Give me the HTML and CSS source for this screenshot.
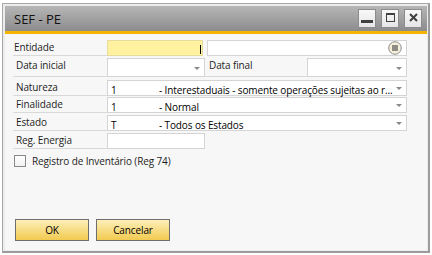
FILE: index.html
```html
<!DOCTYPE html>
<html lang="pt">
<head>
<meta charset="utf-8">
<title>SEF - PE</title>
<link rel="stylesheet" href="styles.css">
</head>
<body>
<div class="window">
  <div class="titlebar">
    <span class="title">SEF - PE</span>
    <div class="win-buttons">
      <span class="wbtn"><svg width="16" height="17" viewBox="0 0 16 17"><rect x="2" y="10" width="12" height="3" fill="#404040"/></svg></span>
      <span class="wbtn"><svg width="16" height="17" viewBox="0 0 16 17"><rect x="4.5" y="3.5" width="8" height="8" fill="none" stroke="#404040" stroke-width="1"/><line x1="4" y1="4.5" x2="13" y2="4.5" stroke="#404040" stroke-width="1"/></svg></span>
      <span class="wbtn"><svg width="16" height="17" viewBox="0 0 16 17"><path d="M5 4 L12 11 M12 4 L5 11" stroke="#404040" stroke-width="2" fill="none"/></svg></span>
    </div>
  </div>
  <div class="accent"></div>
  <div class="content">
    <div class="row row-entidade">
      <div class="label label-first">Entidade</div>
      <div class="field field-yellow"><span class="caret"></span></div>
      <div class="field field-entity"><svg class="menu-icon" width="14" height="14" viewBox="0 0 14 14"><circle cx="7" cy="7" r="6.3" fill="#f3efdb" stroke="#8c8c8c" stroke-width="1"/><path d="M4 5 H10 M4 7 H10 M4 9 H10" stroke="#2c2c2c" stroke-width="1.1"/></svg></div>
    </div>
    <div class="row row-data">
      <div class="label">Data inicial</div>
      <div class="field field-date"><span class="arrow arrow-date"></span></div>
      <div class="label label-mid">Data final</div>
      <div class="field field-date2"><span class="arrow arrow-date"></span></div>
    </div>
    <div class="row row-natureza">
      <div class="label">Natureza</div>
      <div class="field field-wide"><span class="code">1</span><span class="desc">- Interestaduais - somente operações sujeitas ao r...</span><span class="arrow"></span></div>
    </div>
    <div class="row row-finalidade">
      <div class="label">Finalidade</div>
      <div class="field field-wide"><span class="code">1</span><span class="desc">- Normal</span><span class="arrow"></span></div>
    </div>
    <div class="row row-estado">
      <div class="label">Estado</div>
      <div class="field field-wide"><span class="code">T</span><span class="desc">- Todos os Estados</span><span class="arrow"></span></div>
    </div>
    <div class="row row-energia">
      <div class="label">Reg. Energia</div>
      <div class="field field-date"></div>
    </div>
    <div class="check-row">
      <span class="checkbox"></span>
      <span class="check-label">Registro de Inventário (Reg 74)</span>
    </div>
    <div class="button-row">
      <span class="btn">OK</span>
      <span class="btn">Cancelar</span>
    </div>
  </div>
</div>
</body>
</html>
```
FILE: styles.css
```css
html, body {
  margin: 0;
  height: 100%;
}
body {
  background: #ffffff;
  font-family: "Open Sans", "Liberation Sans", sans-serif;
  font-size: 10px;
  letter-spacing: -0.12px;
  color: #1e1e1e;
}
.window {
  margin: 3px 0 0 2px;
  width: 428px;
  height: 250px;
  box-sizing: border-box;
  border: 1px solid #a8a8a8;
  border-right: 2px solid #9c9c9c;
  border-bottom: 2px solid #9c9c9c;
  padding: 2px 1px 1px 2px;
  background: #ececec;
  display: flex;
  flex-direction: column;
}
.titlebar {
  height: 25px;
  flex: none;
  background: linear-gradient(#b6b6b6, #8c8c8c);
  display: flex;
  align-items: center;
  padding: 0 5px 0 9px;
}
.title {
  flex: 1;
  font-size: 13px;
  letter-spacing: 0;
  color: #111111;
}
.win-buttons {
  display: flex;
  gap: 5px;
  align-self: flex-start;
  margin-top: 3px;
}
.wbtn {
  width: 18px;
  height: 19px;
  box-sizing: border-box;
  border: 1px solid #8c8c8c;
  background: linear-gradient(#f8f8f8, #e6e6e6);
  display: flex;
}
.accent {
  height: 3px;
  flex: none;
  background: #f4b400;
}
.content {
  flex: 1;
  background: #f7f7f7;
  padding: 6px 20px 0 8px;
  display: flex;
  flex-direction: column;
}
.row {
  display: flex;
  height: 16px;
  flex: none;
}
.row-entidade { margin-bottom: 2px; }
.row-data { height: 19px; margin-bottom: 3px; }
.row-natureza { margin-bottom: 1px; }
.row-finalidade { margin-bottom: 2px; }
.row-estado { margin-bottom: 2px; }

.label {
  width: 94px;
  flex: none;
  box-sizing: border-box;
  padding: 1px 0 0 3px;
  line-height: 12px;
  border-bottom: 1px solid #d9d9d9;
  color: #1e1e1e;
}
.label-first { padding-left: 1px; }
.label-mid {
  width: 102px;
  padding-left: 4px;
}
.field {
  box-sizing: border-box;
  height: 100%;
  border: 1px solid #d4d4d4;
  background: #ffffff;
  display: flex;
  align-items: center;
  padding: 0 4px 0 2px;
  color: #000000;
}
.field-yellow {
  width: 96px;
  background: #fff1a0;
  border-color: #e6dc9c;
  justify-content: flex-end;
  padding-right: 1px;
}
.caret {
  width: 1px;
  height: 9px;
  background: #000000;
  align-self: flex-end;
  margin-bottom: 1px;
}
.field-entity {
  width: 200px;
  margin-left: 4px;
  justify-content: flex-end;
  padding-right: 4px;
}
.menu-icon { display: block; }
.field-date {
  width: 98px;
  justify-content: flex-end;
}
.field-date2 {
  width: 100px;
  justify-content: flex-end;
}
.field-wide {
  width: 300px;
}
.code {
  width: 48px;
  flex: none;
  align-self: flex-start;
  margin-top: 3px;
  padding-left: 1px;
  line-height: 12px;
}
.desc {
  flex: 1;
  min-width: 0;
  align-self: flex-start;
  margin-top: 3px;
  line-height: 13px;
  white-space: nowrap;
}
.arrow {
  flex: none;
  width: 0;
  height: 0;
  border-left: 3px solid transparent;
  border-right: 3px solid transparent;
  border-top: 3px solid #8a8a8a;
  margin-left: 4px;
}
.arrow-date { margin-top: 2px; }

.check-row {
  display: flex;
  align-items: center;
  margin-top: 6px;
  height: 12px;
  padding-left: 1px;
}
.checkbox {
  width: 12px;
  height: 12px;
  box-sizing: border-box;
  border: 1px solid #8a8a8a;
  background: linear-gradient(#ffffff, #f2f2f2);
}
.check-label {
  margin-left: 6px;
  color: #1e1e1e;
}
.button-row {
  display: flex;
  gap: 7px;
  margin-top: 52px;
  padding-left: 2px;
}
.btn {
  width: 74px;
  height: 22px;
  box-sizing: border-box;
  border: 1px solid #6e6e6e;
  background: linear-gradient(#fdefb9, #f2ca50);
  display: flex;
  align-items: center;
  justify-content: center;
  color: #000000;
}
```
